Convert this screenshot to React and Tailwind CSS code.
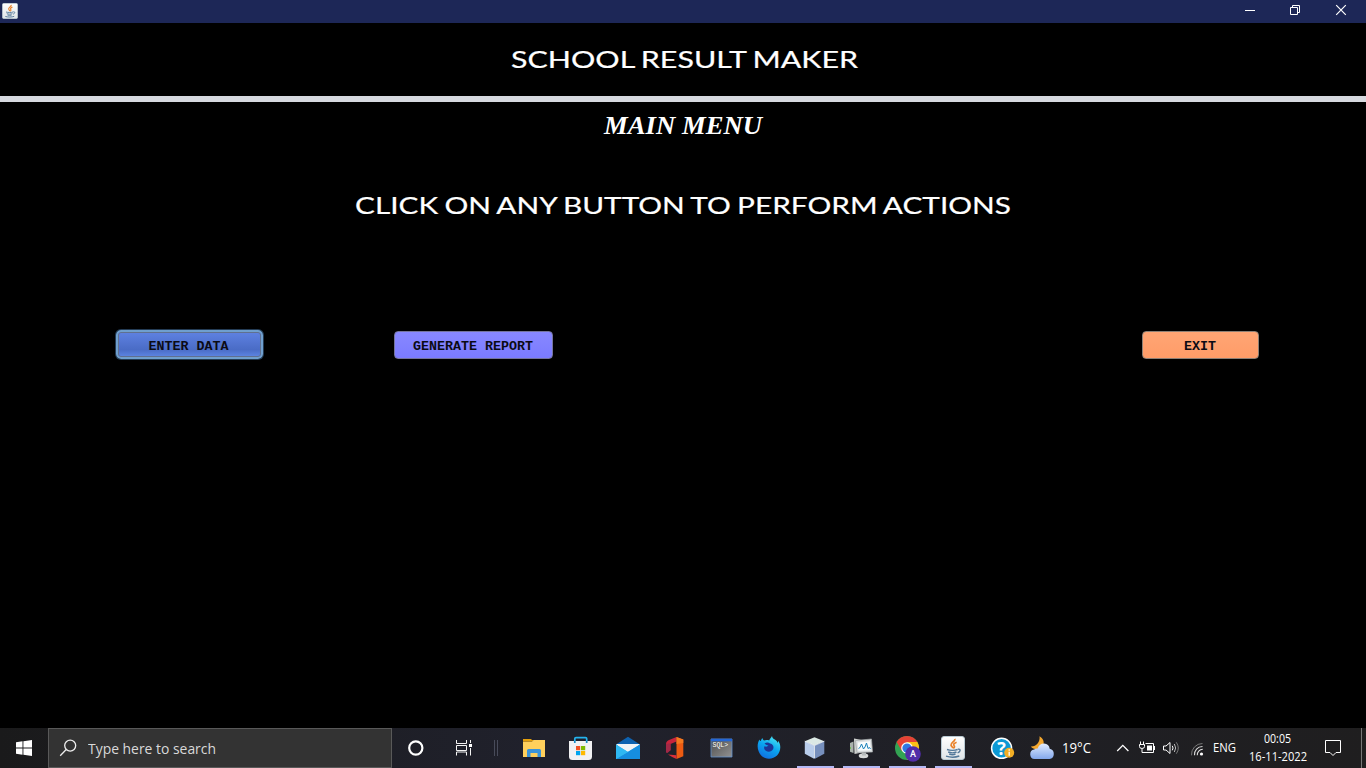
import { useLayoutEffect, useRef, useState } from "react";

// Stretches a single line of text horizontally so that it fills the width of its box.
function FitText({ className = "", children }) {
  const box = useRef(null);
  const text = useRef(null);
  const [scale, setScale] = useState(1);
  useLayoutEffect(() => {
    setScale(box.current.clientWidth / text.current.getBoundingClientRect().width);
  }, []);
  return (
    <div ref={box} className={`shrink-0 whitespace-nowrap ${className}`}>
      <span ref={text} className="inline-block origin-left" style={{ transform: `scaleX(${scale})` }}>
        {children}
      </span>
    </div>
  );
}

function Icon({ x, w, y = 728, h = 40, className = "", children }) {
  return (
    <svg width={w} height={h} viewBox={`${x} ${y} ${w} ${h}`} className={`block shrink-0 ${className}`} fill="none" aria-hidden="true">
      {children}
    </svg>
  );
}

function JavaCup() {
  return (
    <>
      <rect x="0.5" y="0.5" width="23" height="23" rx="2.5" fill="url(#javaBg)" stroke="#b9cad3" />
      <path d="M13.8 2.8c1 2.2-4.3 3.8-3.8 6.2.2 1.3 1.6 1.8 1.8 3.2M15.600 6.200c-2.700 1-3.500 2.200-2.500 3.400.9 1 .1 2.100-.8 2.800" stroke="#e9822b" strokeWidth="1.700" />
      <path d="M6 13.500c2.800 1 8.200.9 10.700 0M7.200 16c2.400.9 6.200.9 8.300 0M8.200 18.100c2 .7 4.700.7 6.300 0M5 20.200c4.100 1.200 9.800 1.100 13.300-.2M17 13.200c2.900-.5 2.900 2.500-.4 3.600" stroke="#54799a" strokeWidth="1.400" />
    </>
  );
}

function TitleBar() {
  return (
    <header className="flex h-[23px] shrink-0 items-start justify-between bg-[#1d2757]">
      <svg width="16" height="16" viewBox="0 0 24 24" fill="none" className="ml-[2px] mt-[3px]">
        <defs>
          <linearGradient id="javaBg" x1="0" y1="0" x2="0" y2="1">
            <stop stopColor="#ffffff" />
            <stop offset="1" stopColor="#dfe4e7" />
          </linearGradient>
        </defs>
        <JavaCup />
      </svg>
      <div className="flex">
        <Icon x={1227} w={46} y={0} h={22}>
          <path d="M1245 10.500h10" stroke="#fff" />
        </Icon>
        <Icon x={1273} w={46} y={0} h={22}>
          <path d="M1292.500 7V5.500h7v7h-2M1290.500 7.500h7v7h-7z" stroke="#fff" />
        </Icon>
        <Icon x={1319} w={47} y={0} h={22}>
          <path d="M1336.200 5.200l9.600 9.600M1345.800 5.200l-9.600 9.600" stroke="#fff" strokeWidth="1.200" />
        </Icon>
      </div>
    </header>
  );
}

function Menu() {
  const label = "font-['Liberation_Mono',monospace] font-bold text-[13.33px] leading-none text-[#0b0b14]";
  return (
    <div className="flex h-[31px] items-center pl-[116px] pr-[107px]">
      <button className={`${label} h-[29px] w-[147px] rounded-[5px] border-2 border-[#6f9fce] bg-linear-to-b from-[#5f82e2] via-[#4a6cc6] via-70% to-[#5e86e4] pr-[2px] pt-[4px] shadow-[inset_0_0_0_1px_#60708f,0_0_0_1px_#243c55]`}>
        ENTER DATA
      </button>
      <button className={`${label} ml-[131px] h-[28px] w-[159px] rounded-[4px] border border-[#74749c] bg-linear-to-b from-[#8888ff] to-[#7b7bff] pr-px pt-[4px]`}>
        GENERATE REPORT
      </button>
      <button className={`${label} ml-auto h-[28px] w-[117px] rounded-[4px] border border-[#8d8075] bg-linear-to-b from-[#ffa574] to-[#ff9c68] pr-px pt-[4px]`}>
        EXIT
      </button>
    </div>
  );
}

function AppCell({ x, w = 46, active, children }) {
  return (
    <div className="relative h-10 shrink-0">
      <Icon x={x} w={w}>{children}</Icon>
      {active && <span className="absolute bottom-0 left-[5px] h-[2px] w-[37px] bg-[#b3b8f5]" />}
    </div>
  );
}

function Taskbar() {
  return (
    <footer className="flex h-10 shrink-0 items-stretch overflow-hidden bg-linear-to-r from-[#1a1a1b] via-[#20212c] via-40% to-[#1f1e1f] font-['Open_Sans','Noto_Sans',sans-serif] text-white">
      <Icon x={0} w={48}>
        <path d="M16 742.200l6.500-.9v6.200H16zM23.400 741.200L32 740v7.500h-8.600zM16 748.400h6.500v6.300l-6.500-.9zM23.400 748.400H32v7.600l-8.600-1.200z" fill="#fff" />
      </Icon>
      <div className="flex w-[344px] shrink-0 items-center border border-[#595959] bg-[#333333]">
        <Icon x={49} w={39} h={38} y={729}>
          <circle cx="70.200" cy="745.600" r="5.500" stroke="#eee" strokeWidth="1.300" />
          <path d="M66.200 749.500l-6 6.300" stroke="#eee" strokeWidth="1.300" />
        </Icon>
        <FitText className="w-[128px] text-[15px] leading-5 text-[#d9d9d9]">Type here to search</FitText>
      </div>
      <Icon x={392} w={48}>
        <circle cx="415.800" cy="748" r="6.600" stroke="#fff" strokeWidth="2.200" />
      </Icon>
      <Icon x={440} w={48}>
        <path d="M456.500 740v3.500h10V740M456.500 755.500V752h10v3.500M456.500 745.500h10v5h-10zM470.500 740v3M470.500 748v7.500" stroke="#f4f4f4" />
        <path d="M469 744h3v3h-3z" fill="#fff" />
      </Icon>
      <Icon x={488} w={22}>
        <path d="M494.500 740v16M497.500 740v16" stroke="#484b5a" />
      </Icon>

      <AppCell x={510} w={47}>
        <path d="M523 739h8l2 2h-10z" fill="#e5a00c" />
        <path d="M523 741.500h9l1.500-1.500H545v17h-22z" fill="#ffd05c" />
        <path d="M523 741h9l1-1" stroke="#e5a00c" />
        <path d="M527 757v-6.500q0-1.500 1.500-1.500h11q1.500 0 1.500 1.500v6.500h-3.500v-4h-7v4z" fill="#3b94d9" />
      </AppCell>
      <AppCell x={557} w={47}>
        <path d="M574.800 743v-4.200q0-1.200 1.200-1.200h9.500q1.200 0 1.200 1.200v4.200" stroke="#24b4ee" strokeWidth="1.700" />
        <path d="M569 741h23v15.500q0 3.500-3.500 3.500h-16q-3.500 0-3.500-3.500z" fill="#f1f1f3" />
        <path d="M574.800 741v2M586.700 741v2" stroke="#198ac4" strokeWidth="1.700" />
        <path d="M576 746h4.200v4.200H576z" fill="#f25022" />
        <path d="M581 746h4.200v4.200H581z" fill="#7fba00" />
        <path d="M576 751h4.200v4.200H576z" fill="#00a4ef" />
        <path d="M581 751h4.200v4.200H581z" fill="#ffb900" />
      </AppCell>
      <AppCell x={604} w={47}>
        <path d="M616 744.500l12-7.800 12 7.800z" fill="#0e62b0" />
        <path d="M616 744h24l-8 9h-8z" fill="#f1f3f5" />
        <path d="M616 744.500l12 7.500 12-7.500V759h-24z" fill="#30b6f1" />
        <path d="M616 759l24-14.500V759z" fill="#168ee0" />
        <path d="M616 744.500l12 7.500-12 7z" fill="#2fb8f3" />
      </AppCell>
      <AppCell x={651} w={47}>
        <path d="M676.500 737l-7.500 3q-3 1.200-3 4.300v8.200l4.500-2.200v-6.300l6-2.500z" fill="#c7243d" />
        <path d="M666 744v7.500q0 2 1.700 1.300l2.800-2.500v-7z" fill="#a22846" />
        <path d="M676.500 737l6.800 2.500v16.800l-6.800 2.700z" fill="#ed5b12" />
        <path d="M676.500 737l6.800 2.500v3.500l-6.800 1z" fill="#f4791f" />
        <path d="M668 754.500l8.500.8v3.700q-4.800-2-8.500-4.500z" fill="#d93039" />
      </AppCell>
      <AppCell x={698} w={47}>
        <defs>
          <linearGradient id="sql" x1="0" y1="0" x2="1" y2="1">
            <stop stopColor="#4c4c4c" />
            <stop offset="1" stopColor="#929292" />
          </linearGradient>
        </defs>
        <path d="M711 739h21v18h-21z" fill="url(#sql)" stroke="#5f8fcc" strokeWidth=".8" />
        <path d="M711 738.800h21v2.500h-21z" fill="#2467d6" />
        <text x="712.500" y="747.200" fontSize="6.500" fontFamily="Liberation Mono" fill="#fff">SQL&gt;</text>
      </AppCell>
      <AppCell x={745} w={47}>
        <defs>
          <linearGradient id="fox" x1="0.800" y1="0" x2="0.300" y2="1">
            <stop stopColor="#4de8f4" />
            <stop offset=".5" stopColor="#0aa5ef" />
            <stop offset="1" stopColor="#116ee1" />
          </linearGradient>
        </defs>
        <path d="M772 736c-.8 2-2.300 2.700-2.800 4.400-1.500-.6-3.700-.6-5.200.1-1-.6-1.500-1.700-1.500-2.500-1 .9-1.400 1.800-1.600 3-1-.3-1.300-.8-1.400-1.500-2.200 3.600-2.400 8-.9 11.800 1.700 4.500 5.500 7.500 10.300 7.500 6.500 0 11.400-5 11.400-11.500 0-2.400-.7-4.600-2.300-6.500v2.200c-.9-1.400-1.700-2.700-3.200-3.500-1.300-.7-2.600-1.500-2.800-3.500z" fill="url(#fox)" />
        <path d="M764.500 743.500c2-1.500 4.300-1.200 5.500-.1 3 .5 4.300 3.400 3 5.900-1.300 2.500-4.800 3.200-7.200 1.400-1.800-1.300-2-3.300-1.300-4.500 1.500.8 2.800.4 4-.4l-2.500-1z" fill="#1c3596" />
      </AppCell>
      <AppCell x={792} active>
        <path d="M804.800 741.200l9.700-3.900 9.800 3.900-9.800 4.300z" fill="#dce9e5" />
        <path d="M804.800 741.200l9.700 4.300V759l-9.700-5.300z" fill="#b9cdeb" />
        <path d="M824.300 741.200l-9.800 4.300V759l9.800-5.300z" fill="#7790bd" />
        <path d="M804.800 741.200l9.700 4.300 9.800-4.300M814.500 745.500V758" stroke="#f4f7fb" strokeWidth=".8" />
      </AppCell>
      <AppCell x={838} active>
        <path d="M850 743l3.500-1.500v11.500l-3.500-1.200z" fill="#a9b1ac" />
        <path d="M854 738.500l10.500 2v11.500l-10 2z" fill="#d1d3d1" />
        <path d="M855.500 740.500l16-1.500 1 13-15.500.5z" fill="#dfe2e3" stroke="#a1a6a7" strokeWidth=".7" />
        <path d="M857.700 742.400l12.300-1.200.7 9-12.300.5z" fill="#f9fcfd" />
        <path d="M858.500 748.500l1.500-1 1.500-3.500 2 5 1.500-2 1.500-4 1.500 5.500 1.500-1 1 1.500" stroke="#1b82bb" />
        <path d="M850.500 747v2" stroke="#75bd54" />
        <ellipse cx="863.500" cy="755.700" rx="4.800" ry="2.500" fill="#d7d9d9" />
        <path d="M862 752.500h4v3h-4z" fill="#b6babb" />
      </AppCell>
      <AppCell x={884} active>
        <circle cx="907" cy="748" r="12" fill="#33a353" />
        <path d="M896.600 742A12 12 0 0 1 917.400 742H907l-5.200 9z" fill="#e64235" />
        <path d="M917.400 742A12 12 0 0 1 907 760l5.200-9-5.200-9z" fill="#fbc116" />
        <circle cx="907" cy="748" r="5.800" fill="#fff" />
        <circle cx="907" cy="748" r="4.600" fill="#2f78e3" />
        <circle cx="913" cy="754" r="7.800" fill="#512da8" />
        <text x="913" y="757.200" textAnchor="middle" fontSize="9" fontFamily="Roboto" fontWeight="500" fill="#fff">A</text>
      </AppCell>
      <AppCell x={930} active>
        <g transform="translate(941 736)">
          <JavaCup />
        </g>
      </AppCell>

      <Icon x={976} w={45}>
        <circle cx="1001.600" cy="748.300" r="10" fill="#0c99d5" stroke="#fff" strokeWidth="1.500" />
        <text x="1001.600" y="755" textAnchor="middle" fontSize="18" fontFamily="Open Sans" fontWeight="bold" fill="#fff">?</text>
        <circle cx="1009.200" cy="752.700" r="5" fill="#f2ae25" />
        <path d="M1009.200 749.300v1.500M1009.200 751.800v4" stroke="#fff" strokeWidth="1.300" />
      </Icon>
      <Icon x={1021} w={41}>
        <defs>
          <linearGradient id="cloud" x1="0" y1="0" x2="0" y2="1">
            <stop stopColor="#e2edff" />
            <stop offset="1" stopColor="#83a7ec" />
          </linearGradient>
        </defs>
        <path d="M1039.500 736.200c4 2.300 5.400 6.500 3.100 10-2.600 3.800-9 4.100-11.800.2 5 .5 9.600-4.500 8.700-10.200z" fill="#f3a72e" />
        <path d="M1034.500 759a4.800 4.800 0 0 1-.3-9.500q1.300-1.300 3.400-1 1.800-5 6.400-5 5 .2 5.700 5.300a5.200 5.200 0 0 1-.2 10.200z" fill="url(#cloud)" />
      </Icon>
      <FitText className="mt-[10px] w-[29px] text-[14px] leading-5">19°C</FitText>
      <Icon x={1091} w={44}>
        <path d="M1117.200 751l5.600-5.600 5.600 5.600" stroke="#fff" strokeWidth="1.300" />
      </Icon>
      <Icon x={1135} w={24}>
        <path d="M1145.500 743.500h8v9h-10M1154.500 746v4" stroke="#fff" />
        <path d="M1147 745.500h5v5H1147z" fill="#fff" />
        <path d="M1140.500 741.500v2.500M1143.500 741.500v2.500M1142 749v3.500h2" stroke="#fff" />
        <path d="M1139.500 744.500h5v2q0 2-2.500 2t-2.500-2z" stroke="#fff" />
      </Icon>
      <Icon x={1159} w={26}>
        <path d="M1163.500 746v4h2.500l4 3.500v-11l-4 3.500z" stroke="#fff" />
        <path d="M1172.300 745.800q1.500 2.200 0 4.500" stroke="#fff" />
        <path d="M1174.300 744q2.800 4 0 8" stroke="#bbb" />
        <path d="M1176.300 742.300q4 5.700 0 11.400" stroke="#777" />
      </Icon>
      <Icon x={1185} w={28}>
        <path d="M1191.500 755.300a11 11 0 0 1 11-11.800" stroke="#777" />
        <path d="M1194.500 755.300a8 8 0 0 1 8-8.800M1197.300 755.300a5.500 5.500 0 0 1 5.500-6" stroke="#ddd" strokeWidth="1.100" />
        <circle cx="1201.500" cy="754" r="1.600" fill="#fff" />
      </Icon>
      <FitText className="mt-[10px] w-[23px] text-[12px] leading-5">ENG</FitText>
      <div className="ml-[13px] flex w-[58px] shrink-0 flex-col items-center pt-[2px] text-[12px] leading-[18px]">
        <FitText className="-ml-px w-[27px]">00:05</FitText>
        <FitText className="w-[58px]">16-11-2022</FitText>
      </div>
      <Icon x={1307} w={54}>
        <path d="M1325.500 740.500h15v12h-4.500l-3 3-3-3h-4.500z" stroke="#fff" />
      </Icon>
      <div className="w-px shrink-0 bg-[#777777]" />
    </footer>
  );
}

export default function App() {
  const heading = "font-['Lato',sans-serif] text-[23px] leading-8 [word-spacing:-1px] [-webkit-text-stroke:0.2px_white]";
  return (
    <div className="flex h-[768px] w-[1366px] flex-col overflow-hidden bg-black text-white">
      <TitleBar />
      <main className="flex min-h-0 flex-1 flex-col">
        <div className="flex h-[73px] shrink-0 items-center justify-center pb-[2px] pl-[2px]">
          <FitText className={`w-[347px] ${heading}`}>SCHOOL RESULT MAKER</FitText>
        </div>
        <div className="h-[6px] shrink-0 bg-[#d6d9df]" />
        <div className="flex h-[47px] shrink-0 items-center justify-center">
          <FitText className="w-[158px] font-['Liberation_Serif',serif] text-[26px] font-bold italic leading-8">MAIN MENU</FitText>
        </div>
        <div className="mt-[39px] flex h-[33px] shrink-0 items-center justify-center">
          <FitText className={`w-[656px] ${heading}`}>CLICK ON ANY BUTTON TO PERFORM ACTIONS</FitText>
        </div>
        <div className="mt-[108px]">
          <Menu />
        </div>
      </main>
      <Taskbar />
    </div>
  );
}
